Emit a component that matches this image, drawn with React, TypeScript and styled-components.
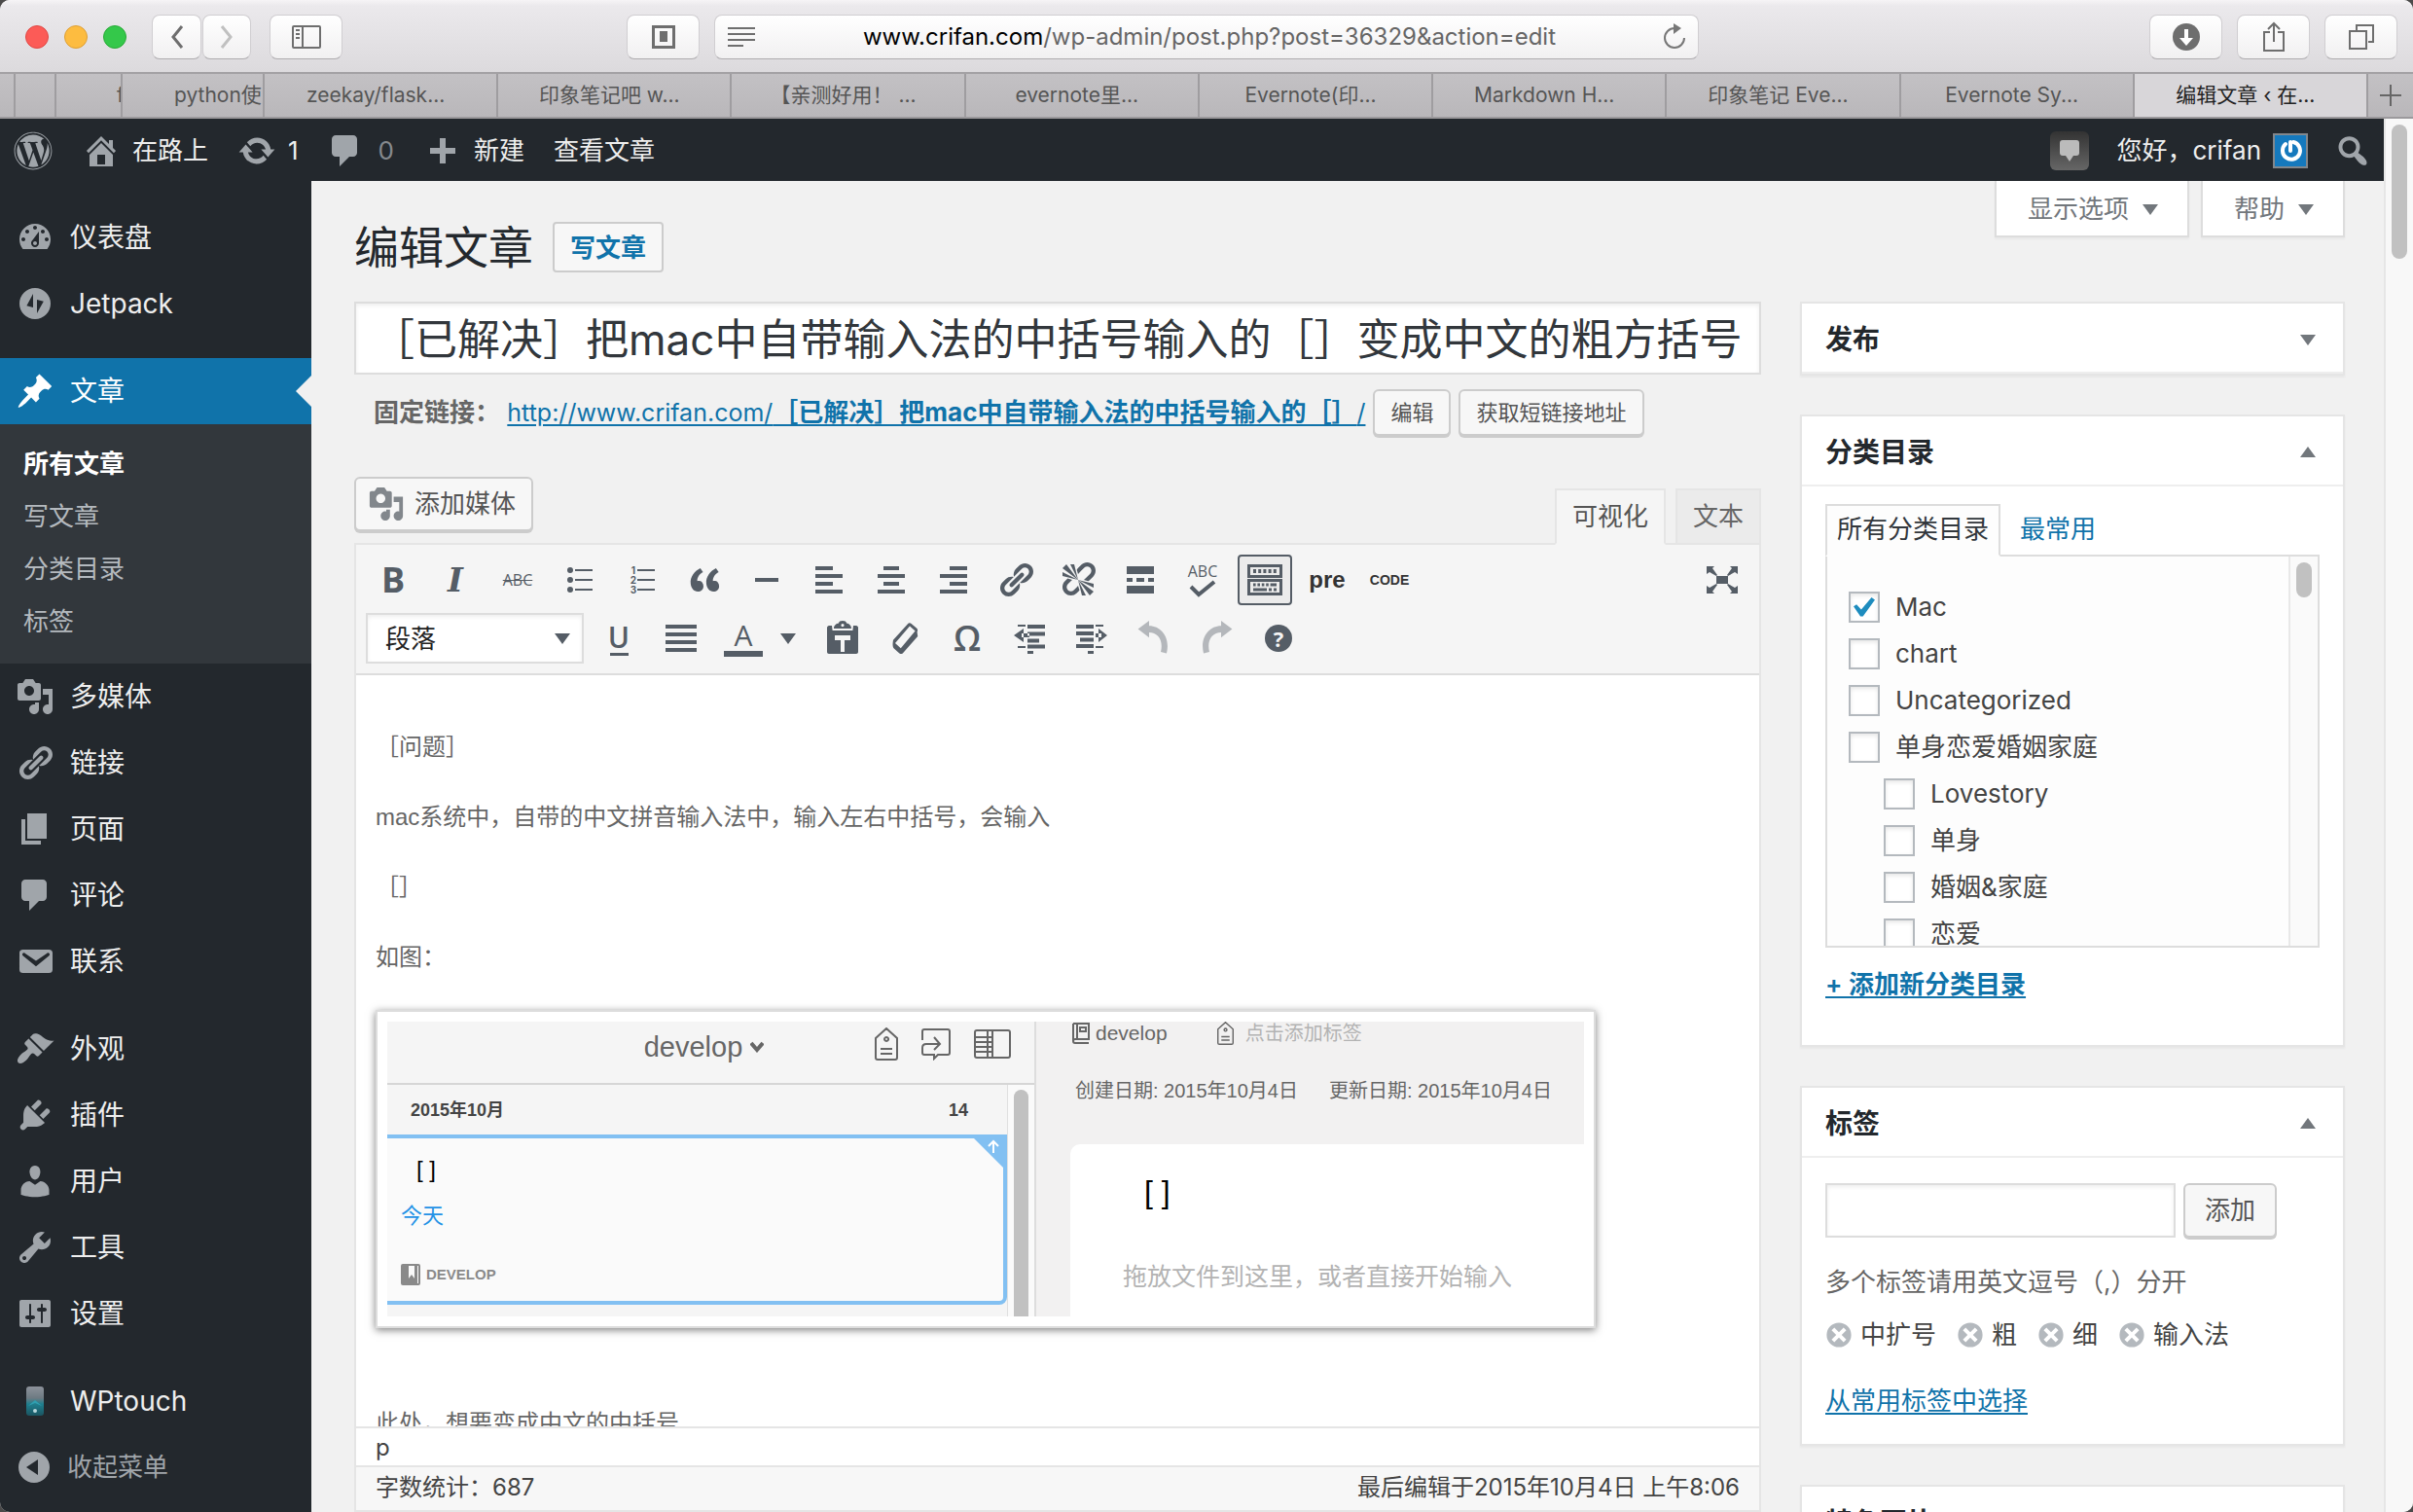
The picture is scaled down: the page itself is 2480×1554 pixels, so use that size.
import React from "react";
import styled, { createGlobalStyle, css } from "styled-components";
import { FaWordpress } from "react-icons/fa";

const UI = `Inter, "Noto Sans CJK SC", sans-serif`;
const HELV = `"Liberation Sans", "Noto Sans CJK SC", sans-serif`;

const c = {
  bar: "#23282d",
  sub: "#32373c",
  blue: "#1073aa",
  page: "#f1f1f1",
  icon: "#a0a5aa",
  tool: "#555d66",
  line: "#e5e5e5",
  field: "#dddddd",
  text: "#444444",
};

const GlobalStyle = createGlobalStyle`
  *, *::before, *::after { box-sizing: border-box; }
  body { margin: 0; background: #4b4a4a; font-family: ${UI}; color: ${c.text}; text-spacing-trim: space-all; }
  button, input, select { font-family: inherit; color: inherit; margin: 0; }
  button { cursor: pointer; }
  h1, h2, p, ul, figure { margin: 0; padding: 0; }
  ul { list-style: none; }
  svg { display: block; flex: none; }
`;

/* ---------- icon paths, 20 unit grid ---------- */
const paths = {
  dashboard:
    "M3.76 16h12.48c1.1-1.37 1.76-3.11 1.76-5 0-4.42-3.58-8-8-8s-8 3.58-8 8c0 1.89.66 3.63 1.76 5zM10 4c.55 0 1 .45 1 1s-.45 1-1 1-1-.45-1-1 .45-1 1-1zM6 6c.55 0 1 .45 1 1s-.45 1-1 1-1-.45-1-1 .45-1 1-1zm8 0c.55 0 1 .45 1 1s-.45 1-1 1-1-.45-1-1 .45-1 1-1zm-5.37 5.55L12 7v6c0 1.1-.9 2-2 2s-2-.9-2-2c0-.57.24-1.08.63-1.45zM4 10c.55 0 1 .45 1 1s-.45 1-1 1-1-.45-1-1 .45-1 1-1zm12 0c.55 0 1 .45 1 1s-.45 1-1 1-1-.45-1-1 .45-1 1-1zm-5 3c0-.55-.45-1-1-1s-1 .45-1 1 .45 1 1 1 1-.45 1-1z",
  jetpack: "M10 2a8 8 0 1 0 0 16 8 8 0 0 0 0-16zM9 5v7l-3.300-.9zM11 8l3.400.9L11 15z",
  pin: "M10.44 3.02l1.82-1.82 6.36 6.35-1.83 1.82c-1.05-.68-2.48-.57-3.41.36l-.75.75c-.92.93-1.04 2.35-.35 3.41l-1.83 1.82-2.41-2.41-2.8 2.79c-.42.42-3.38 2.71-3.8 2.29s1.86-3.39 2.28-3.81l2.79-2.79L4.1 9.36l1.83-1.82c1.05.69 2.48.57 3.4-.36l.75-.75c.93-.92 1.05-2.35.36-3.41z",
  media:
    "M13 11V4c0-.55-.45-1-1-1h-1.67L9 1H5L3.67 3H2c-.55 0-1 .45-1 1v7c0 .55.45 1 1 1h10c.55 0 1-.45 1-1zM7 4.5c1.38 0 2.5 1.12 2.5 2.5S8.38 9.5 7 9.5 4.5 8.38 4.5 7 5.62 4.5 7 4.5zM14 6h5v10.5c0 1.38-1.12 2.5-2.5 2.5S14 17.88 14 16.5s1.12-2.5 2.5-2.5c.17 0 .34.02.5.05V9h-3V6zm-4 8.05V13h2v3.5c0 1.38-1.12 2.5-2.5 2.5S7 17.88 7 16.5 8.12 14 9.5 14c.17 0 .34.02.5.05z",
  link: "M17.74 2.76c1.68 1.69 1.68 4.41 0 6.1l-1.53 1.52c-1.12 1.12-2.7 1.47-4.14 1.09l2.62-2.61.76-.77.76-.76c.84-.84.84-2.2 0-3.04-.84-.85-2.2-.85-3.04 0l-.77.76-3.38 3.38c-.37-1.44-.02-3.02 1.1-4.14l1.52-1.53c1.69-1.68 4.42-1.68 6.1 0zM8.59 13.43l5.34-5.34c.42-.42.42-1.1 0-1.52-.44-.43-1.13-.39-1.53 0l-5.33 5.34c-.42.42-.42 1.1 0 1.52.44.43 1.13.39 1.52 0zm-.76 2.29l4.14-4.15c.38 1.44.03 3.02-1.09 4.14l-1.52 1.53c-1.69 1.68-4.41 1.68-6.1 0-1.68-1.68-1.68-4.42 0-6.1l1.53-1.52c1.12-1.12 2.7-1.47 4.14-1.1l-4.14 4.15c-.85.84-.85 2.2 0 3.05.84.84 2.2.84 3.04 0z",
  page: "M6 15V2h10v13H6zm-1 1h8v2H3V5h2v11z",
  comment: "M5 2h9c1.1 0 2 .9 2 2v7c0 1.1-.9 2-2 2h-2l-5 5v-5H5c-1.1 0-2-.9-2-2V4c0-1.1.9-2 2-2z",
  mail: "M3.87 4h13.25C18.37 4 19 4.59 19 5.79v8.42c0 1.19-.63 1.79-1.88 1.79H3.87c-1.25 0-1.88-.6-1.88-1.79V5.79c0-1.2.63-1.79 1.88-1.79zm6.62 8.6l6.74-5.53c.24-.2.43-.66.13-1.07-.29-.41-.82-.42-1.17-.17l-5.7 3.86L4.8 5.83c-.35-.25-.88-.24-1.17.17-.3.41-.11.87.13 1.07z",
  brush:
    "M14.48 11.06L7.41 3.99l1.5-1.5c.5-.56 2.3-.47 3.51.32 1.21.8 1.43 1.28 2.91 2.1 1.18.64 2.45 1.26 4.45.85zm-.71.71L6.7 4.7 4.93 6.47c-.39.39-.39 1.02 0 1.41l1.06 1.06c.39.39.39 1.03 0 1.42-.6.6-1.43 1.11-2.21 1.69-.35.26-.7.53-1.01.84C1.43 14.23.4 16.08 1.4 17.07c.99 1 2.84-.03 4.18-1.36.31-.31.58-.66.85-1.02.57-.78 1.08-1.61 1.69-2.21.39-.39 1.02-.39 1.41 0l1.06 1.06c.39.39 1.02.39 1.41 0z",
  plug: "M13.11 4.36L9.87 7.6 8 5.73l3.24-3.24c.35-.34 1.05-.2 1.56.32.52.51.66 1.21.31 1.55zm-8 1.77l.91-1.12 9.01 9.01-1.19.84c-.71.71-2.63 1.16-3.82 1.16H6.14L4.9 17.26c-.59.59-1.54.59-2.12 0-.59-.58-.59-1.53 0-2.12l1.24-1.24v-3.88c0-1.13.4-3.19 1.09-3.89zm7.26 3.97l3.24-3.24c.34-.35 1.04-.21 1.55.31.52.51.66 1.21.31 1.55l-3.24 3.25z",
  user: "M10 9.25c-2.27 0-2.73-3.44-2.73-3.44C7 4.02 7.82 2 9.97 2c2.16 0 2.98 2.02 2.71 3.81 0 0-.41 3.44-2.68 3.44zm0 2.57L12.72 10c2.39 0 4.52 2.33 4.52 4.53v2.49s-3.65 1.13-7.24 1.13c-3.65 0-7.24-1.13-7.24-1.13v-2.49c0-2.25 1.94-4.48 4.47-4.48z",
  wrench:
    "M16.68 9.77c-1.34 1.34-3.3 1.67-4.95.99l-5.41 6.52c-.99.99-2.59.99-3.58 0s-.99-2.59 0-3.57l6.52-5.42c-.68-1.65-.35-3.61.99-4.95 1.28-1.28 3.12-1.62 4.72-1.06l-2.89 2.89 2.82 2.82 2.86-2.87c.53 1.58.18 3.39-1.08 4.65zM3.81 16.21c.4.39 1.04.39 1.43 0 .4-.4.4-1.04 0-1.43-.39-.4-1.03-.4-1.43 0-.39.39-.39 1.03 0 1.43z",
  sliders:
    "M18 16V4c0-.55-.45-1-1-1H3c-.55 0-1 .45-1 1v12c0 .55.45 1 1 1h14c.55 0 1-.45 1-1zM8 11h1c.55 0 1 .45 1 1s-.45 1-1 1H8v1.5c0 .28-.22.5-.5.5s-.5-.22-.5-.5V13H6c-.55 0-1-.45-1-1s.45-1 1-1h1V5.5c0-.28.22-.5.5-.5s.5.22.5.5V11zm5-2h-1c-.55 0-1-.45-1-1s.45-1 1-1h1V5.5c0-.28.22-.5.5-.5s.5.22.5.5V7h1c.55 0 1 .45 1 1s-.45 1-1 1h-1v5.5c0 .28-.22.5-.5.5s-.5-.22-.5-.5V9z",
  collapse: "M10 2a8 8 0 1 0 0 16 8 8 0 0 0 0-16zM12 6v8l-6-4z",
  home: "M16 8.5l1.53 1.53-1.06 1.06L10 4.6l-6.47 6.49-1.06-1.06L10 2.5l4 4v-2h2v4zm-6-2.46l6 5.99V18H4v-5.97zM12 17v-5H8v5h4z",
  update:
    "M10.2 3.28c3.53 0 6.43 2.61 6.92 6h2.08l-3.5 4-3.5-4h2.32c-.45-1.97-2.21-3.45-4.32-3.45-1.45 0-2.73.71-3.54 1.78L4.95 5.66C6.23 4.2 8.11 3.28 10.2 3.28zm-.4 13.44c-3.52 0-6.43-2.61-6.92-6H.8l3.5-4c1.17 1.33 2.33 2.67 3.5 4H5.48c.45 1.97 2.21 3.45 4.32 3.45 1.45 0 2.73-.71 3.54-1.78l1.71 1.95c-1.28 1.46-3.15 2.38-5.25 2.38z",
  plus: "M8.500 3.500h3v5h5v3h-5v5h-3v-5h-5v-3h5z",
  search:
    "M12.14 4.18c1.87 1.87 2.11 4.75.72 6.89.12.1.22.21.36.31.2.16.47.36.81.59.34.24.56.39.66.47.42.31.73.57.94.78.32.32.6.65.84 1 .25.35.44.69.59 1.04.14.35.21.68.18 1-.02.32-.14.59-.36.81s-.49.34-.81.36c-.31.02-.65-.04-.99-.19-.35-.14-.7-.34-1.04-.59-.35-.24-.68-.52-1-.84-.21-.21-.47-.52-.77-.93-.1-.13-.25-.35-.47-.66-.22-.32-.4-.57-.56-.78-.16-.2-.29-.35-.44-.5-2.07 1.09-4.69.76-6.44-.98-2.14-2.15-2.14-5.64 0-7.78 2.15-2.15 5.63-2.15 7.78 0zm-1.41 6.36c1.36-1.37 1.36-3.58 0-4.95-1.37-1.37-3.59-1.37-4.95 0-1.37 1.37-1.37 3.58 0 4.95 1.36 1.37 3.58 1.37 4.95 0z",
  quote:
    "M9.49 13.22c0-.74-.2-1.38-.61-1.9-.62-.78-1.83-.88-2.53-.72-.29-1.65 1.11-3.75 2.92-4.65L7.88 4c-2.73 1.3-5.42 4.28-4.96 8.05C3.21 14.43 4.59 16 6.54 16c.85 0 1.56-.25 2.12-.75s.83-1.18.83-2.03zm8.05 0c0-.74-.2-1.38-.61-1.9-.63-.78-1.83-.88-2.53-.72-.29-1.65 1.11-3.75 2.92-4.65L15.93 4c-2.73 1.3-5.41 4.28-4.95 8.05.29 2.38 1.66 3.95 3.61 3.95.85 0 1.56-.25 2.12-.75s.83-1.18.83-2.03z",
  unlink:
    "M17.74 2.26c1.68 1.69 1.68 4.41 0 6.1l-1.53 1.52c-.32.33-.69.58-1.08.77L13 10l1.69-1.64.76-.77.76-.76c.84-.84.84-2.2 0-3.04-.84-.85-2.2-.85-3.04 0l-.77.76-.76.76L10 7l-.65-2.14c.19-.38.44-.75.77-1.07l1.52-1.53c1.69-1.68 4.42-1.68 6.1 0zM2 4l8 6-6-8zm4-2l4 8-2-8H6zM2 6l8 4-8-2V6zm7.36 7.69L10 13l.74 2.35-1.38 1.39c-1.69 1.68-4.41 1.68-6.1 0-1.68-1.68-1.68-4.42 0-6.1l1.39-1.38L7 10l-.69.64-1.52 1.53c-.85.84-.85 2.2 0 3.04.84.85 2.2.85 3.04 0zM18 16l-8-6 6 8zm-4 2l-4-8 2 8h2zm4-4l-8-4 8 2v2z",
  rule: "M4 9h12v2H4z",
  left: "M3 3h9v2H3zM3 7h14v2H3zM3 11h9v2H3zM3 15h14v2H3z",
  center: "M6 3h8v2H6zM3 7h14v2H3zM6 11h8v2H6zM3 15h14v2H3z",
  right: "M8 3h9v2H8zM3 7h14v2H3zM8 11h9v2H8zM3 15h14v2H3z",
  justify: "M2 3h16v2H2zM2 7h16v2H2zM2 11h16v2H2zM2 15h16v2H2z",
  more: "M3 3h14v4H3zM3 9h3v2H3zM8 9h4v2H8zM14 9h3v2h-3zM3 13h14v4H3z",
  sink: "M1 2h18v7H1zM2.500 3.500v4h15v-4zM4 4.500h1.500v2H4zM6.600 4.500h1.500v2H6.600zM9.200 4.500h1.500v2H9.200zM11.800 4.500h1.500v2h-1.500zM14.400 4.500h1.500v2h-1.500zM1 9.500h18V18H1zM2.500 11v5.500h15V11zM4 11.700h1.300v1.500H4zM6.200 11.700h1.300v1.500H6.200zM8.400 11.700h1.300v1.500H8.400zM10.600 11.700h1.300v1.500h-1.300zM12.800 11.700H16v1.500h-3.200zM4 14.200h7v1.500H4zM12 14.200h1.500v1.500H12zM14.500 14.200H16v1.500h-1.500z",
  expand:
    "M7 8h6v4H7zM2 3h4L5 4l2.500 3.500-.5.500L3.500 6 2 7zM18 3h-4l1 1-2.500 3.500.5.500L16.500 6 18 7zM2 17h4l-1-1 2.500-3.500L7 12l-3.500 2L2 13zM18 17h-4l1-1-2.500-3.500.500-.500 3.500 2 1.500-1z",
  paste:
    "M2 4.500C2 4 2.500 3.500 3 3.500h1.500L4.800 6h10.400l.3-2.500H17c.5 0 1 .5 1 1V17c0 .6-.4 1-1 1H3c-.6 0-1-.4-1-1zM5.500 5c0-1.500 1.200-2.500 2.500-2.700C8 1.400 8.900 1 10 1s2 .4 2 1.300c1.300.2 2.500 1.200 2.500 2.700zM10 2.500a.8.8 0 1 0 0 1.600.8.8 0 0 0 0-1.600zM6 8.500v2.500h3v6h2v-6h3V8.500z",
  eraser:
    "M11.500 2.600c.4-.5 1.200-.6 1.800-.1l2.800 2.400c.5.500.6 1.200.2 1.800l.3 2.300L9 17.600c-.5.500-1.200.600-1.800.100l-2.800-2.400c-.5-.5-.9-1.700-.4-4.400zM12.500 3.800L5 12.500l2.900 2.600 7.400-8.800z",
  outdent:
    "M4 3h4v1H4zM9 3h9v2H9zM9 6.800h9v2H9zM9 10.300h6v2H9zM9 13.300h9v2H9zM4 14h4v1H4zM9 16.500h3v1.500H9zM7 5v7L2 8.500zM6 7.500h4v2H6z",
  indent:
    "M12 3h4v1h-4zM2 3h9v2H2zM2 6.500h9v2H2zM4 9.800h7v2H4zM2 13h9v2H2zM12 14h4v1h-4zM8 16.500h3V18H8zM13.500 5v7l4.500-3.500zM12 7.500h3v2h-3z",
  undo: "M7.500 1L1.800 5.300l5.700 4.300V7c4.500 0 7.500 4 6 10l3 .7C18.500 10 14 3.600 7.500 3.600z",
  redo: "M12.500 1l5.700 4.300-5.700 4.300V7c-4.500 0-7.500 4-6 10l-3 .7C1.500 10 6 3.600 12.500 3.600z",
  down: "M2 5h16l-8 11z",
  up: "M2 15h16L10 4z",
  cross:
    "M10 1a9 9 0 1 0 0 18 9 9 0 0 0 0-18zM6.600 4.600L10 8l3.400-3.400 2 2L12 10l3.400 3.400-2 2L10 12l-3.400 3.400-2-2L8 10 4.600 6.600z",
};
type IconName = keyof typeof paths;

const Icon = ({ name, size = 40, fill = "currentColor" }: { name: IconName; size?: number; fill?: string }) => (
  <svg width={size} height={size} viewBox="0 0 20 20" fill={fill} fillRule="evenodd" aria-hidden="true">
    <path d={paths[name]} />
  </svg>
);

/* ---------- browser window ---------- */
const Window = styled.div`
  height: 100vh;
  display: flex;
  flex-direction: column;
  overflow: hidden;
  border-radius: 10px;
  background: ${c.page};
`;
const Chrome = styled.header`
  flex: none;
  height: 76px;
  padding: 1px 16px 0;
  display: grid;
  grid-template-columns: 1fr minmax(0, 1012px) 1fr;
  column-gap: 15px;
  align-items: center;
  background: linear-gradient(#f6f4f6 0, #ebe9ec 6px, #dcdadd);
  border-bottom: 2px solid #a3a1a4;
`;
const ChromeSide = styled.div<{ $end?: boolean }>`
  display: flex;
  align-items: center;
  gap: ${(p) => (p.$end ? 15 : 0)}px;
  justify-content: ${(p) => (p.$end ? "flex-end" : "flex-start")};
`;
const Lights = styled.div`
  display: flex;
  gap: 16px;
  margin: 0 26px 0 10px;
`;
const Light = styled.button<{ $c: string; $b: string }>`
  width: 24px;
  height: 24px;
  padding: 0;
  border-radius: 50%;
  border: 1px solid ${(p) => p.$b};
  background: ${(p) => p.$c};
`;
const chromeFace = css`
  height: 46px;
  border: 1px solid #d0ced1;
  border-bottom-color: #aeacaf;
  border-radius: 8px;
  background: linear-gradient(#ffffff, #f1f0f1);
  color: #6e6e6e;
`;
const ChromeButton = styled.button<{ $w?: number }>`
  ${chromeFace}
  width: ${(p) => p.$w ?? 75}px;
  flex: none;
  padding: 0;
  display: flex;
  align-items: center;
  justify-content: center;
`;
const NavPair = styled.div`
  display: flex;
  gap: 1px;
  margin-right: 19px;
`;
const Spacer = styled.div`
  flex: 1;
`;
const Address = styled.div`
  ${chromeFace}
  display: flex;
  align-items: center;
  padding: 0 12px;
`;
const Url = styled.button`
  flex: 1;
  min-width: 0;
  border: 0;
  padding: 0;
  background: none;
  font-size: 24px;
  line-height: 32px;
  color: #666;
  white-space: nowrap;
  b {
    font-weight: 400;
    color: #000;
  }
`;
const TabStrip = styled.nav`
  flex: none;
  display: flex;
  height: 46px;
  background: linear-gradient(#c3c1c4, #b9b7ba);
  border-bottom: 2px solid #9b999c;
`;
const BrowserTab = styled.button<{ $w?: number; $pad?: number; $active?: boolean }>`
  ${(p) => (p.$w ? `flex: none; width: ${p.$w}px;` : "flex: 1 1 0; min-width: 0;")}
  padding: ${(p) => (p.$pad ? `0 0 0 ${p.$pad}px` : "0 10px 0 0")};
  text-align: ${(p) => (p.$pad ? "left" : "center")};
  border: 0;
  border-right: 2px solid #9f9da0;
  background: ${(p) => (p.$active ? "#d8d6d9" : "none")};
  color: ${(p) => (p.$active ? "#222" : "#555")};
  font-size: 21px;
  line-height: 30px;
  white-space: pre;
  overflow: hidden;
`;
const NewTab = styled.button`
  flex: none;
  width: 46px;
  padding: 0;
  border: 0;
  background: none;
  color: #666;
  display: grid;
  place-items: center;
`;
const Body = styled.div`
  flex: 1;
  min-height: 0;
  display: flex;
`;
const Document = styled.div`
  flex: 1;
  min-width: 0;
  display: flex;
  flex-direction: column;
`;
const ScrollTrack = styled.div`
  flex: none;
  width: 30px;
  padding: 6px 6px;
  background: #f8f8f8;
  border-left: 2px solid #e6e6e6;
`;
const ScrollThumb = styled.div<{ $h: number }>`
  width: 16px;
  height: ${(p) => p.$h}px;
  border-radius: 8px;
  background: #c1c1c1;
`;

/* ---------- admin bar ---------- */
const AdminBar = styled.nav`
  flex: none;
  height: 64px;
  padding: 2px 12px 0 14px;
  display: flex;
  align-items: center;
  background: ${c.bar};
  color: #eee;
`;
const BarLink = styled.a<{ $gap?: number; $mr?: number }>`
  display: flex;
  align-items: center;
  gap: ${(p) => p.$gap ?? 12}px;
  margin-right: ${(p) => p.$mr ?? 30}px;
  font-size: 26px;
  line-height: 40px;
  color: #eee;
  text-decoration: none;
  white-space: nowrap;
  svg {
    color: ${c.icon};
  }
`;
const Muted = styled.span`
  color: #85898d;
`;
const Notes = styled.button`
  width: 40px;
  height: 40px;
  margin-right: 28px;
  padding: 0;
  border: 0;
  border-radius: 6px;
  background: linear-gradient(#333, #666);
  display: grid;
  place-items: center;
  color: #bbb;
`;
const Avatar = styled.span`
  width: 36px;
  height: 36px;
  border: 2px solid #82878c;
  background: #1579bd;
  display: grid;
  place-items: center;
`;

/* ---------- side menu ---------- */
const Columns = styled.div`
  flex: 1;
  min-height: 0;
  display: flex;
`;
const Side = styled.nav`
  flex: none;
  width: 320px;
  padding-top: 24px;
  background: ${c.bar};
`;
const MenuItem = styled.a<{ $current?: boolean; $first?: boolean; $quiet?: boolean }>`
  display: flex;
  align-items: center;
  height: 68px;
  margin-top: ${(p) => (p.$first ? 22 : 0)}px;
  font-size: ${(p) => (p.$quiet ? 26 : 28)}px;
  line-height: 36px;
  text-decoration: none;
  color: ${(p) => (p.$current ? "#fff" : p.$quiet ? c.icon : "#eee")};
  background: ${(p) => (p.$current ? c.blue : "none")};
`;
const MenuIcon = styled.span<{ $current?: boolean; $w?: number }>`
  flex: none;
  width: ${(p) => p.$w ?? 72}px;
  display: grid;
  place-items: center;
  color: ${(p) => (p.$current ? "#fff" : c.icon)};
`;
const Notch = styled.span`
  margin-left: auto;
  border: 16px solid transparent;
  border-left: 0;
  border-right-color: ${c.page};
`;
const SubMenu = styled.ul`
  padding: 14px 24px 16px;
  background: ${c.sub};
`;
const SubLink = styled.a<{ $on?: boolean }>`
  display: block;
  font-size: 26px;
  line-height: 54px;
  text-decoration: none;
  font-weight: ${(p) => (p.$on ? 700 : 400)};
  color: ${(p) => (p.$on ? "#fff" : "#b4b9be")};
`;

/* ---------- main ---------- */
const Main = styled.main`
  flex: 1;
  min-width: 0;
  padding: 0 40px 0 44px;
  overflow: hidden;
`;
const HeadRow = styled.div`
  display: flex;
  align-items: flex-start;
  justify-content: space-between;
  margin-bottom: 30px;
`;
const Heading = styled.div`
  display: flex;
  align-items: center;
  gap: 20px;
  padding-top: 42px;
  h1 {
    font-size: 46px;
    line-height: 52px;
    font-weight: 400;
    color: ${c.bar};
  }
`;
const AddNew = styled.a`
  padding: 5px 16px 3px;
  border: 2px solid #ccc;
  border-radius: 4px;
  background: #f7f7f7;
  font-size: 26px;
  line-height: 40px;
  font-weight: 600;
  color: ${c.blue};
  text-decoration: none;
`;
const MetaLinks = styled.div`
  display: flex;
  gap: 12px;
`;
const MetaButton = styled.button`
  display: flex;
  align-items: center;
  gap: 12px;
  height: 58px;
  padding: 2px 28px 0 32px;
  border: 2px solid #ddd;
  border-top: 0;
  background: #fff;
  box-shadow: 0 2px 2px rgba(0, 0, 0, 0.04);
  font-size: 26px;
  line-height: 36px;
  color: #72777c;
`;
const Layout = styled.div`
  display: flex;
  align-items: flex-start;
  gap: 40px;
`;
const Primary = styled.div`
  flex: 1;
  min-width: 0;
`;
const Secondary = styled.aside`
  flex: none;
  width: 560px;
`;
const field = css`
  border: 2px solid ${c.field};
  border-radius: 0;
  background: #fff;
  box-shadow: inset 0 2px 4px rgba(0, 0, 0, 0.07);
`;
const TitleInput = styled.input`
  ${field}
  display: block;
  width: 100%;
  height: 75px;
  padding: 0 16px 3px;
  font-size: 44px;
  line-height: 60px;
  color: ${c.sub};
`;
const Permalink = styled.div`
  display: flex;
  align-items: center;
  padding: 15px 0 0 20px;
  font-size: 26px;
  line-height: 40px;
  color: #666;
  white-space: nowrap;
`;
const Strong = styled.span`
  font-size: 26px;
  font-weight: 700;
`;
const TextLink = styled.a<{ $bold?: boolean; $url?: boolean }>`
  color: ${c.blue};
  font-weight: ${(p) => (p.$bold ? 600 : 400)};
  font-size: ${(p) => (p.$url ? 25 : 26)}px;
  line-height: 40px;
  text-underline-offset: 3px;
  text-decoration: underline;
`;
const Button = styled.button<{ $small?: boolean }>`
  display: flex;
  align-items: center;
  gap: 10px;
  flex: none;
  height: ${(p) => (p.$small ? 48 : 56)}px;
  padding: 0 ${(p) => (p.$small ? 16 : 20)}px;
  border: 2px solid #ccc;
  border-radius: 6px;
  background: #f7f7f7;
  box-shadow: 0 2px 0 #ccc;
  font-size: ${(p) => (p.$small ? 22 : 26)}px;
  line-height: 36px;
  color: #555;
`;
const LinkButtons = styled.div`
  display: flex;
  gap: 8px;
  margin-left: 8px;
`;
const EditorTop = styled.div`
  display: flex;
  align-items: flex-start;
  justify-content: space-between;
  height: 68px;
  margin-top: 42px;
`;
const MediaButton = styled(Button)`
  padding: 0 16px 0 12px;
`;
const EditorTabs = styled.div`
  align-self: flex-end;
  display: flex;
  gap: 10px;
  margin-bottom: -2px;
`;
const EditorTab = styled.button<{ $on?: boolean }>`
  position: relative;
  height: 58px;
  padding: 0 16px;
  border: 2px solid ${c.line};
  border-bottom-color: ${(p) => (p.$on ? "#f5f5f5" : c.line)};
  background: ${(p) => (p.$on ? "#f5f5f5" : "#ebebeb")};
  font-size: 26px;
  line-height: 40px;
  color: ${(p) => (p.$on ? "#555" : "#666")};
`;
const Editor = styled.section`
  border: 2px solid ${c.line};
  background: #fff;
`;
const Tools = styled.div`
  display: flex;
  flex-direction: column;
  gap: 8px;
  padding: 10px 6px;
  background: #f5f5f5;
  border-bottom: 2px solid ${c.field};
`;
const ToolRow = styled.div`
  display: flex;
  align-items: center;
`;
const Tool = styled.button<{ $active?: boolean; $faint?: boolean }>`
  flex: none;
  width: 56px;
  height: 52px;
  margin: 0 4px;
  padding: 0;
  display: grid;
  place-items: center;
  border: 2px solid ${(p) => (p.$active ? c.tool : "transparent")};
  border-radius: 4px;
  background: ${(p) => (p.$active ? "#ebebeb" : "none")};
  color: ${c.tool};
  opacity: ${(p) => (p.$faint ? 0.4 : 1)};
`;
const Glyph = styled.span<{ $size: number; $weight?: number; $italic?: boolean; $strike?: boolean; $serif?: boolean }>`
  font-family: ${(p) => (p.$serif ? `"DejaVu Serif", serif` : `"Open Sans", sans-serif`)};
  font-size: ${(p) => p.$size}px;
  line-height: 32px;
  font-weight: ${(p) => p.$weight ?? 400};
  font-style: ${(p) => (p.$italic ? "italic" : "normal")};
  text-decoration: ${(p) => (p.$strike ? "line-through" : "none")};
`;
const CodeWord = styled.span<{ $size: number }>`
  font-family: ${HELV};
  font-size: ${(p) => p.$size}px;
  line-height: 28px;
  font-weight: 700;
  color: #333;
`;
const Barred = styled.span<{ $w: number; $h: number }>`
  display: flex;
  flex-direction: column;
  align-items: center;
  &::after {
    content: "";
    width: ${(p) => p.$w}px;
    height: ${(p) => p.$h}px;
    background: currentColor;
  }
`;
const Numbered = styled.span`
  display: grid;
  grid-template-columns: 8px 18px;
  align-items: center;
  row-gap: 0;
  font-size: 10px;
  line-height: 10px;
  font-weight: 700;
  i {
    height: 2px;
    background: currentColor;
  }
`;
const Bulleted = styled(Numbered)`
  row-gap: 4px;
  b {
    width: 6px;
    height: 6px;
    border-radius: 50%;
    background: currentColor;
  }
`;
const Spell = styled.span`
  display: flex;
  flex-direction: column;
  align-items: center;
  font-family: "Open Sans", sans-serif;
  font-size: 16px;
  line-height: 18px;
`;
const HelpDot = styled.span`
  width: 28px;
  height: 28px;
  border-radius: 50%;
  background: ${c.tool};
  color: #f5f5f5;
  font-family: "Open Sans", sans-serif;
  font-weight: 700;
  font-size: 22px;
  line-height: 28px;
`;
const ColorArrow = styled.button`
  width: 28px;
  height: 52px;
  margin-right: 10px;
  padding: 0;
  border: 0;
  background: none;
  color: ${c.tool};
  display: grid;
  place-items: center;
`;
const SelectWrap = styled.label`
  display: grid;
  align-items: center;
  width: 224px;
  margin: 0 4px;
  > * {
    grid-area: 1 / 1;
  }
  svg {
    justify-self: end;
    margin-right: 12px;
    pointer-events: none;
    color: ${c.tool};
  }
`;
const Select = styled.select`
  ${field}
  appearance: none;
  height: 52px;
  padding: 0 18px;
  font-size: 26px;
  color: #222;
`;
const Canvas = styled.article`
  height: 772px;
  padding: 56px 20px 0;
  overflow: hidden;
  font-family: ${HELV};
  font-size: 24px;
  line-height: 36px;
  color: #666;
  p {
    margin-bottom: 36px;
  }
`;
const PathRow = styled.div`
  height: 40px;
  padding: 0 20px;
  border-top: 2px solid ${c.line};
  font-size: 24px;
  line-height: 40px;
`;
const StatusRow = styled.div`
  display: flex;
  justify-content: space-between;
  height: 46px;
  padding: 0 20px;
  border-top: 2px solid ${c.line};
  background: #f7f7f7;
  font-size: 24px;
  line-height: 42px;
  white-space: nowrap;
`;

/* ---------- picture in the post: a notes application ---------- */
const Figure = styled.figure`
  display: flex;
  max-width: 1254px;
  height: 327px;
  margin-bottom: 80px;
  padding: 10px;
  border: 2px solid #ddd;
  background: #fff;
  box-shadow: 0 2px 8px rgba(0, 0, 0, 0.5);
  overflow: hidden;
`;
const NotePane = styled.div`
  width: 667px;
  flex: none;
  display: flex;
  flex-direction: column;
  background: #f5f5f5;
  border-right: 2px solid #ddd;
`;
const NoteHead = styled.div`
  display: grid;
  grid-template-columns: 1fr auto 1fr;
  align-items: center;
  height: 65px;
  padding: 0 14px 12px 0;
  border-bottom: 2px solid #d6d6d6;
  color: #666;
`;
const NoteTitle = styled.span`
  grid-column: 2;
  display: flex;
  align-items: center;
  gap: 8px;
  font-size: 29px;
  line-height: 36px;
`;
const NoteIcons = styled.span`
  display: flex;
  align-items: center;
  justify-content: flex-end;
  gap: 24px;
  padding: 0 10px 6px 0;
`;
const NoteBody = styled.div`
  flex: 1;
  min-height: 0;
  display: flex;
`;
const NoteList = styled.div`
  flex: 1;
  border-right: 1px solid #e0e0e0;
`;
const NoteTrack = styled.div`
  width: 27px;
  padding: 5px 0 0 6px;
  background: #fafafa;
  div {
    width: 15px;
    height: 100%;
    border-radius: 8px 8px 0 0;
    background: #c1c1c1;
  }
`;
const MonthRow = styled.div`
  display: flex;
  justify-content: space-between;
  padding: 1px 40px 0 24px;
  font-size: 18px;
  line-height: 50px;
  font-weight: 700;
  color: #444;
`;
const NoteCard = styled.div`
  display: flex;
  height: 175px;
  border: 4px solid #82c0f2;
  border-left: 0;
  border-bottom-right-radius: 8px;
  background: #fafafa;
  justify-content: space-between;
`;
const NoteText = styled.div`
  padding: 14px 14px;
  display: flex;
  flex-direction: column;
`;
const Brackets = styled.span<{ $big?: boolean }>`
  font-size: ${(p) => (p.$big ? 32 : 24)}px;
  line-height: 36px;
  padding-left: ${(p) => (p.$big ? 22 : 16)}px;
  color: #000;
`;
const Today = styled.span`
  margin-top: 12px;
  font-size: 22px;
  line-height: 36px;
  color: #2492e6;
`;
const Book = styled.span`
  display: flex;
  align-items: center;
  gap: 6px;
  margin-top: 30px;
  font-size: 15px;
  line-height: 24px;
  font-weight: 700;
  color: #8a8a8a;
`;
const DetailPane = styled.div`
  flex: 1;
  min-width: 0;
  display: flex;
  flex-direction: column;
  padding-left: 35px;
  background: #f2f1f1;
  white-space: nowrap;
`;
const DetailRow = styled.div<{ $top?: boolean }>`
  display: flex;
  align-items: center;
  font-size: 20px;
  line-height: 24px;
  gap: ${(p) => (p.$top ? 0 : 32)}px;
  padding: ${(p) => (p.$top ? "0 0 35px 2px" : "0 0 43px 5px")};
  color: #666;
`;
const DetailName = styled.span`
  margin: 0 50px 0 6px;
  font-size: 21px;
`;
const Hint = styled.span`
  color: #b3b3b3;
`;
const Sheet = styled.div`
  flex: 1;
  display: flex;
  flex-direction: column;
  gap: 51px;
  padding: 31px 54px 0;
  border-top-left-radius: 10px;
  background: #fff;
  font-size: 25px;
`;

/* ---------- boxes at the right ---------- */
const Box = styled.section`
  margin-bottom: 40px;
  border: 2px solid ${c.line};
  background: #fff;
  box-shadow: 0 2px 2px rgba(0, 0, 0, 0.04);
`;
const BoxHead = styled.div`
  display: flex;
  align-items: center;
  justify-content: space-between;
  height: 72px;
  padding: 3px 26px 0 24px;
  border-bottom: 2px solid #eee;
  h2 {
    font-size: 28px;
    line-height: 40px;
    font-weight: 700;
    color: ${c.bar};
  }
`;
const Toggle = styled.button`
  padding: 0;
  border: 0;
  background: none;
  color: #72777c;
`;
const CatBody = styled.div`
  padding: 18px 24px 42px;
`;
const CatTabs = styled.div`
  display: flex;
  margin-bottom: -2px;
`;
const CatTab = styled.button<{ $on?: boolean }>`
  position: relative;
  height: 54px;
  padding: 0 ${(p) => (p.$on ? 10 : 20)}px 3px;
  border: ${(p) => (p.$on ? `2px solid ${c.field}` : "0")};
  border-bottom: ${(p) => (p.$on ? "2px solid #fdfdfd" : "0")};
  background: ${(p) => (p.$on ? "#fdfdfd" : "none")};
  color: ${(p) => (p.$on ? c.sub : c.blue)};
  font-size: 26px;
  line-height: 40px;
`;
const CatPanel = styled.div`
  display: flex;
  height: 404px;
  margin-bottom: 18px;
  border: 2px solid ${c.field};
  background: #fdfdfd;
  overflow: hidden;
`;
const CatList = styled.ul`
  flex: 1;
  padding: 36px 22px;
  display: flex;
  flex-direction: column;
  gap: 16px;
`;
const CatTrack = styled.div`
  width: 30px;
  padding: 6px;
  border-left: 2px solid #e8e8e8;
  background: #fafafa;
`;
const CatLabel = styled.label<{ $child?: boolean }>`
  display: flex;
  align-items: center;
  gap: 16px;
  padding-left: ${(p) => (p.$child ? 36 : 0)}px;
  font-size: 26px;
  line-height: 32px;
`;
const Check = styled.input`
  appearance: none;
  flex: none;
  width: 32px;
  height: 32px;
  border: 2px solid #b4b9be;
  background: #fff;
  box-shadow: inset 0 2px 4px rgba(0, 0, 0, 0.1);
  display: grid;
  place-items: center;
  &:checked::before {
    content: "";
    width: 22px;
    height: 20px;
    background: #1e8cbe;
    clip-path: polygon(0 46%, 14% 36%, 36% 62%, 84% 0, 100% 12%, 44% 98%, 32% 98%);
  }
`;
const TagBody = styled.div`
  padding: 26px 24px 24px;
`;
const TagRow = styled.div`
  display: flex;
  gap: 8px;
`;
const TagInput = styled.input`
  ${field}
  width: 360px;
  height: 56px;
  padding: 0 12px;
  font-size: 26px;
`;
const TagHint = styled.p`
  margin: 26px 0 14px;
  font-size: 26px;
  line-height: 40px;
  color: #666;
`;
const Tags = styled.ul`
  display: flex;
  gap: 21px;
  margin-bottom: 28px;
  font-size: 26px;
  line-height: 40px;
  li {
    display: flex;
    align-items: center;
    gap: 8px;
  }
`;
const RemoveTag = styled.button`
  padding: 0;
  border: 0;
  background: none;
  color: #b4b9be;
`;

/* ---------- data ---------- */
const tabs: { label: string; w?: number; pad?: number }[] = [
  { label: "", w: 16 },
  { label: "", w: 42 },
  { label: "f", w: 68, pad: 62 },
  { label: "python使", w: 146, pad: 53 },
  { label: "zeekay/flask..." },
  { label: "印象笔记吧 w..." },
  { label: "【亲测好用！ ..." },
  { label: "evernote里..." },
  { label: "Evernote(印..." },
  { label: "Markdown H..." },
  { label: "印象笔记 Eve..." },
  { label: "Evernote Sy..." },
  { label: "编辑文章 ‹ 在..." },
];
const menuTop: [string, IconName][] = [
  ["仪表盘", "dashboard"],
  ["Jetpack", "jetpack"],
];
const menuMid: [string, IconName, boolean?][] = [
  ["多媒体", "media"],
  ["链接", "link"],
  ["页面", "page"],
  ["评论", "comment"],
  ["联系", "mail"],
  ["外观", "brush", true],
  ["插件", "plug"],
  ["用户", "user"],
  ["工具", "wrench"],
  ["设置", "sliders"],
];
const cats: [string, boolean, boolean][] = [
  ["Mac", true, false],
  ["chart", false, false],
  ["Uncategorized", false, false],
  ["单身恋爱婚姻家庭", false, false],
  ["Lovestory", false, true],
  ["单身", false, true],
  ["婚姻&家庭", false, true],
  ["恋爱", false, true],
];

/* ---------- small drawings ---------- */
const Line = ({ w, h, d, sw = 2, box }: { w: number; h: number; d: string; sw?: number; box?: string }) => (
  <svg width={w} height={h} viewBox={box ?? `0 0 ${w} ${h}`} fill="none" stroke="currentColor" strokeWidth={sw} aria-hidden="true">
    <path d={d} />
  </svg>
);
const PhoneIcon = () => (
  <svg width="20" height="32" viewBox="0 0 20 32" aria-hidden="true">
    <defs>
      <linearGradient id="phone" x1="0" y1="0" x2="0" y2="1">
        <stop offset="0" stopColor="#8d929b" />
        <stop offset=".4" stopColor="#6d7a82" />
        <stop offset=".6" stopColor="#1f7f8e" />
        <stop offset="1" stopColor="#1b5561" />
      </linearGradient>
    </defs>
    <rect x="1" y="1" width="18" height="30" rx="3" fill="url(#phone)" />
    <path d="M3 21l7-6 7 6-7-3z" fill="#2f9fb0" />
    <circle cx="10" cy="26" r="2" fill="#b6d6db" />
  </svg>
);
const TagIcon = ({ w, h }: { w: number; h: number }) => (
  <Line w={w} h={h} box="0 0 24 34" d="M1 11L12 1l11 10v20a2 2 0 0 1-2 2H3a2 2 0 0 1-2-2zM12 10a2 2 0 1 0 .1 0zM6 22h12M6 27h12" />
);

const PostBox = ({ title, open, children }: { title: string; open: boolean; children?: React.ReactNode }) => (
  <Box>
    <BoxHead>
      <h2>{title}</h2>
      <Toggle aria-label={`切换面板：${title}`}>
        <Icon name={open ? "up" : "down"} size={20} />
      </Toggle>
    </BoxHead>
    {children}
  </Box>
);

const IconTool = ({ icon, label, active, faint }: { icon: IconName; label: string; active?: boolean; faint?: boolean }) => (
  <Tool aria-label={label} $active={active} $faint={faint}>
    <Icon name={icon} size={40} />
  </Tool>
);

export default function App() {
  return (
    <>
      <GlobalStyle />
      <Window>
        <Chrome>
          <ChromeSide>
            <Lights>
              <Light $c="#fc5b57" $b="#df4744" aria-label="close" />
              <Light $c="#fdbc40" $b="#de9f34" aria-label="minimize" />
              <Light $c="#34c84a" $b="#27aa35" aria-label="zoom" />
            </Lights>
            <NavPair>
              <ChromeButton $w={51} aria-label="back">
                <Line w={14} h={26} sw={3} d="M12 2L3 13l9 11" />
              </ChromeButton>
              <ChromeButton $w={50} aria-label="forward">
                <svg width="14" height="26" fill="none" stroke="#c0c0c0" strokeWidth="3">
                  <path d="M2 2l9 11-9 11" />
                </svg>
              </ChromeButton>
            </NavPair>
            <ChromeButton aria-label="sidebar">
              <Line w={30} h={24} d="M2 1h26a1 1 0 0 1 1 1v20a1 1 0 0 1-1 1H2a1 1 0 0 1-1-1V2a1 1 0 0 1 1-1zM11 1v22M4 5h4M4 9h4M4 13h4" />
            </ChromeButton>
            <Spacer />
            <ChromeButton aria-label="site">
              <svg width="24" height="24" fill="#6e6e6e">
                <path fillRule="evenodd" d="M0 0h24v24H0zM3 3v18h18V3z" />
                <path d="M8 6h8v11H8z" />
              </svg>
            </ChromeButton>
          </ChromeSide>
          <Address>
            <Line w={30} h={22} d="M1 2h28M1 8h28M1 14h28M1 20h16" />
            <Url>
              <b>www.crifan.com</b>/wp-admin/post.php?post=36329&amp;action=edit
            </Url>
            <svg width="24" height="28" viewBox="0 0 24 28" fill="none" stroke="#777" strokeWidth="2" aria-hidden="true">
              <path d="M12 5a10 10 0 1 0 10 10" />
              <path d="M11 0v11l8-6z" fill="#777" stroke="none" />
            </svg>
          </Address>
          <ChromeSide $end>
            <ChromeButton aria-label="downloads">
              <svg width="28" height="28" viewBox="0 0 28 28">
                <circle cx="14" cy="14" r="14" fill="#6e6e6e" />
                <path d="M12 6h4v9h5l-7 8-7-8h5z" fill="#fff" />
              </svg>
            </ChromeButton>
            <ChromeButton aria-label="share">
              <Line w={24} h={32} d="M8 11H2v19h20V11h-6M12 21V2M6 8l6-6 6 6" />
            </ChromeButton>
            <ChromeButton aria-label="tabs">
              <Line w={26} h={26} d="M1 7h17v18H1zM8 7V1h17v17h-5" />
            </ChromeButton>
          </ChromeSide>
        </Chrome>
        <TabStrip>
          {tabs.map((t, i) => (
            <BrowserTab key={i} $w={t.w} $pad={t.pad} $active={i === tabs.length - 1} aria-label={t.label || "tab"}>
              {t.label}
            </BrowserTab>
          ))}
          <NewTab aria-label="new tab">
            <Line w={22} h={22} d="M11 0v22M0 11h22" />
          </NewTab>
        </TabStrip>

        <Body>
          <Document>
            <AdminBar>
              <BarLink href="#" aria-label="WordPress">
                <FaWordpress size={40} />
              </BarLink>
              <BarLink href="#">
                <Icon name="home" />
                在路上
              </BarLink>
              <BarLink href="#" $mr={28}>
                <Icon name="update" />1
              </BarLink>
              <BarLink href="#" $gap={14}>
                <Icon name="comment" />
                <Muted>0</Muted>
              </BarLink>
              <BarLink href="#">
                <Icon name="plus" />
                新建
              </BarLink>
              <BarLink href="#">查看文章</BarLink>
              <Spacer />
              <Notes aria-label="notifications">
                <svg width="20" height="22" fill="currentColor">
                  <path d="M3 0h14a3 3 0 0 1 3 3v10a3 3 0 0 1-3 3h-3l-4 6-4-6H3a3 3 0 0 1-3-3V3a3 3 0 0 1 3-3z" />
                </svg>
              </Notes>
              <BarLink href="#" $mr={26}>
                您好，crifan
                <Avatar>
                  <svg width="26" height="26" viewBox="0 0 26 26" fill="none" stroke="#fff" strokeWidth="4" strokeLinecap="round">
                    <path d="M8 6a9 9 0 1 0 8-2M13 4v9" />
                  </svg>
                </Avatar>
              </BarLink>
              <BarLink href="#" $mr={0} aria-label="搜索">
                <Icon name="search" />
              </BarLink>
            </AdminBar>

            <Columns>
              <Side>
                {menuTop.map(([label, icon]) => (
                  <MenuItem href="#" key={label}>
                    <MenuIcon>
                      <Icon name={icon} />
                    </MenuIcon>
                    {label}
                  </MenuItem>
                ))}
                <MenuItem href="#" $current $first>
                  <MenuIcon $current>
                    <Icon name="pin" />
                  </MenuIcon>
                  文章
                  <Notch />
                </MenuItem>
                <SubMenu>
                  {["所有文章", "写文章", "分类目录", "标签"].map((s, i) => (
                    <li key={s}>
                      <SubLink href="#" $on={i === 0}>
                        {s}
                      </SubLink>
                    </li>
                  ))}
                </SubMenu>
                {menuMid.map(([label, icon, first]) => (
                  <MenuItem href="#" key={label} $first={first}>
                    <MenuIcon>
                      <Icon name={icon} />
                    </MenuIcon>
                    {label}
                  </MenuItem>
                ))}
                <MenuItem href="#" $first>
                  <MenuIcon>
                    <PhoneIcon />
                  </MenuIcon>
                  WPtouch
                </MenuItem>
                <MenuItem href="#" $quiet>
                  <MenuIcon $w={69}>
                    <Icon name="collapse" />
                  </MenuIcon>
                  收起菜单
                </MenuItem>
              </Side>

              <Main>
                <HeadRow>
                  <Heading>
                    <h1>编辑文章</h1>
                    <AddNew href="#">写文章</AddNew>
                  </Heading>
                  <MetaLinks>
                    <MetaButton>
                      显示选项 <Icon name="down" size={20} />
                    </MetaButton>
                    <MetaButton>
                      帮助 <Icon name="down" size={20} />
                    </MetaButton>
                  </MetaLinks>
                </HeadRow>

                <Layout>
                  <Primary>
                    <TitleInput aria-label="标题" defaultValue="［已解决］把mac中自带输入法的中括号输入的［］变成中文的粗方括号" />
                    <Permalink>
                      <Strong>固定链接：</Strong>
                      <span>&nbsp;</span>
                      <TextLink href="#" $url>
                        http://www.crifan.com/<Strong>［已解决］把mac中自带输入法的中括号输入的［］</Strong>/
                      </TextLink>
                      <LinkButtons>
                        <Button $small>编辑</Button>
                        <Button $small>获取短链接地址</Button>
                      </LinkButtons>
                    </Permalink>

                    <EditorTop>
                      <MediaButton>
                        <Icon name="media" size={38} fill="#82878c" />
                        添加媒体
                      </MediaButton>
                      <EditorTabs>
                        <EditorTab $on>可视化</EditorTab>
                        <EditorTab>文本</EditorTab>
                      </EditorTabs>
                    </EditorTop>

                    <Editor>
                      <Tools>
                        <ToolRow>
                          <Tool aria-label="粗体">
                            <Glyph $size={36} $weight={700}>B</Glyph>
                          </Tool>
                          <Tool aria-label="斜体">
                            <Glyph $size={34} $weight={700} $italic $serif>I</Glyph>
                          </Tool>
                          <Tool aria-label="删除线">
                            <Glyph $size={16} $strike>ABC</Glyph>
                          </Tool>
                          <Tool aria-label="项目符号列表">
                            <Bulleted>
                              <b /><i /><b /><i /><b /><i />
                            </Bulleted>
                          </Tool>
                          <Tool aria-label="编号列表">
                            <Numbered>
                              1<i />2<i />3<i />
                            </Numbered>
                          </Tool>
                          <IconTool icon="quote" label="段落引用" />
                          <IconTool icon="rule" label="水平线" />
                          <IconTool icon="left" label="左对齐" />
                          <IconTool icon="center" label="居中" />
                          <IconTool icon="right" label="右对齐" />
                          <IconTool icon="link" label="插入链接" />
                          <IconTool icon="unlink" label="移除链接" />
                          <IconTool icon="more" label="插入More标签" />
                          <Tool aria-label="拼写检查">
                            <Spell>
                              ABC
                              <Line w={30} h={18} sw={4} d="M3 7l8 8L27 2" />
                            </Spell>
                          </Tool>
                          <IconTool icon="sink" label="工具栏开关" active />
                          <Tool aria-label="pre">
                            <CodeWord $size={24}>pre</CodeWord>
                          </Tool>
                          <Tool aria-label="code">
                            <CodeWord $size={14}>CODE</CodeWord>
                          </Tool>
                          <Spacer />
                          <IconTool icon="expand" label="全屏" />
                        </ToolRow>
                        <ToolRow>
                          <SelectWrap>
                            <Select aria-label="段落格式">
                              <option>段落</option>
                            </Select>
                            <Icon name="down" size={20} />
                          </SelectWrap>
                          <Tool aria-label="下划线">
                            <Barred $w={19} $h={3}>
                              <Glyph $size={30} $weight={600}>U</Glyph>
                            </Barred>
                          </Tool>
                          <IconTool icon="justify" label="两端对齐" />
                          <Tool aria-label="文字颜色">
                            <Barred $w={40} $h={6}>
                              <Glyph $size={30}>A</Glyph>
                            </Barred>
                          </Tool>
                          <ColorArrow aria-label="选择颜色">
                            <Icon name="down" size={20} />
                          </ColorArrow>
                          <IconTool icon="paste" label="粘贴为文本" />
                          <IconTool icon="eraser" label="清除格式" />
                          <Tool aria-label="特殊字符">
                            <Glyph $size={36} $weight={600}>Ω</Glyph>
                          </Tool>
                          <IconTool icon="outdent" label="减少缩进量" />
                          <IconTool icon="indent" label="增加缩进量" />
                          <IconTool icon="undo" label="撤销" faint />
                          <IconTool icon="redo" label="重做" faint />
                          <Tool aria-label="键盘快捷键">
                            <HelpDot>?</HelpDot>
                          </Tool>
                        </ToolRow>
                      </Tools>

                      <Canvas>
                        <p>［问题］</p>
                        <p>mac系统中，自带的中文拼音输入法中，输入左右中括号，会输入</p>
                        <p>［］</p>
                        <p>如图：</p>
                        <Figure>
                          <NotePane>
                            <NoteHead>
                              <NoteTitle>
                                develop
                                <Line w={14} h={12} sw={4} d="M1 2l6 7 6-7" />
                              </NoteTitle>
                              <NoteIcons>
                                <TagIcon w={24} h={34} />
                                <Line w={30} h={34} d="M1 13V4a2 2 0 0 1 2-2h24a2 2 0 0 1 2 2v22a2 2 0 0 1-2 2H17l-4 4v-4H3a2 2 0 0 1-2-2v-5q0-4 4-4h13M13 10l6 7-6 6" />
                                <Line w={38} h={30} d="M3 1h32a2 2 0 0 1 2 2v24a2 2 0 0 1-2 2H3a2 2 0 0 1-2-2V3a2 2 0 0 1 2-2zM19 1v28M14 1v28M2 8h17M2 13h17M2 18h17M2 23h17" />
                              </NoteIcons>
                            </NoteHead>
                            <NoteBody>
                              <NoteList>
                                <MonthRow>
                                  <span>2015年10月</span>
                                  <span>14</span>
                                </MonthRow>
                                <NoteCard>
                                  <NoteText>
                                    <Brackets>[ ]</Brackets>
                                    <Today>今天</Today>
                                    <Book>
                                      <svg width="20" height="22" fill="#8a8a8a">
                                        <path fillRule="evenodd" d="M2 0h16a2 2 0 0 1 2 2v18a2 2 0 0 1-2 2H2a2 2 0 0 1-2-2V2a2 2 0 0 1 2-2zM8 2v13l3-4 3 4V2zM17 2v18h1V2z" />
                                      </svg>
                                      DEVELOP
                                    </Book>
                                  </NoteText>
                                  <svg width="30" height="30">
                                    <path d="M0 0h30v30z" fill="#82c0f2" />
                                    <path d="M20 15V3M15 8l5-5 5 5" fill="none" stroke="#fff" strokeWidth="2" />
                                  </svg>
                                </NoteCard>
                              </NoteList>
                              <NoteTrack>
                                <div />
                              </NoteTrack>
                            </NoteBody>
                          </NotePane>
                          <DetailPane>
                            <DetailRow $top>
                              <Line w={18} h={22} d="M1 1h16v16H3a2 2 0 0 0 0 4h14M1 1v18M5 1v16M8 5h6v4H8z" />
                              <DetailName>develop</DetailName>
                              <TagIcon w={19} h={24} />
                              <Hint>&nbsp;&nbsp;点击添加标签</Hint>
                            </DetailRow>
                            <DetailRow>
                              <span>创建日期: 2015年10月4日</span>
                              <span>更新日期: 2015年10月4日</span>
                            </DetailRow>
                            <Sheet>
                              <Brackets $big>[ ]</Brackets>
                              <Hint>拖放文件到这里，或者直接开始输入</Hint>
                            </Sheet>
                          </DetailPane>
                        </Figure>
                        <p>此处，想要变成中文的中括号</p>
                      </Canvas>
                      <PathRow>p</PathRow>
                      <StatusRow>
                        <span>字数统计：687</span>
                        <span>最后编辑于2015年10月4日 上午8:06</span>
                      </StatusRow>
                    </Editor>
                  </Primary>

                  <Secondary>
                    <PostBox title="发布" open={false} />
                    <PostBox title="分类目录" open>
                      <CatBody>
                        <CatTabs>
                          <CatTab $on>所有分类目录</CatTab>
                          <CatTab>最常用</CatTab>
                        </CatTabs>
                        <CatPanel>
                          <CatList>
                            {cats.map(([name, on, child]) => (
                              <li key={name}>
                                <CatLabel $child={child}>
                                  <Check type="checkbox" defaultChecked={on} />
                                  {name}
                                </CatLabel>
                              </li>
                            ))}
                          </CatList>
                          <CatTrack>
                            <ScrollThumb $h={36} />
                          </CatTrack>
                        </CatPanel>
                        <TextLink href="#" $bold>
                          + 添加新分类目录
                        </TextLink>
                      </CatBody>
                    </PostBox>
                    <PostBox title="标签" open>
                      <TagBody>
                        <TagRow>
                          <TagInput aria-label="添加新标签" />
                          <Button>添加</Button>
                        </TagRow>
                        <TagHint>多个标签请用英文逗号（,）分开</TagHint>
                        <Tags>
                          {["中扩号", "粗", "细", "输入法"].map((t) => (
                            <li key={t}>
                              <RemoveTag aria-label={`移除：${t}`}>
                                <Icon name="cross" size={28} />
                              </RemoveTag>
                              {t}
                            </li>
                          ))}
                        </Tags>
                        <TextLink href="#">从常用标签中选择</TextLink>
                      </TagBody>
                    </PostBox>
                    <PostBox title="特色图片" open />
                  </Secondary>
                </Layout>
              </Main>
            </Columns>
          </Document>
          <ScrollTrack>
            <ScrollThumb $h={138} />
          </ScrollTrack>
        </Body>
      </Window>
    </>
  );
}
